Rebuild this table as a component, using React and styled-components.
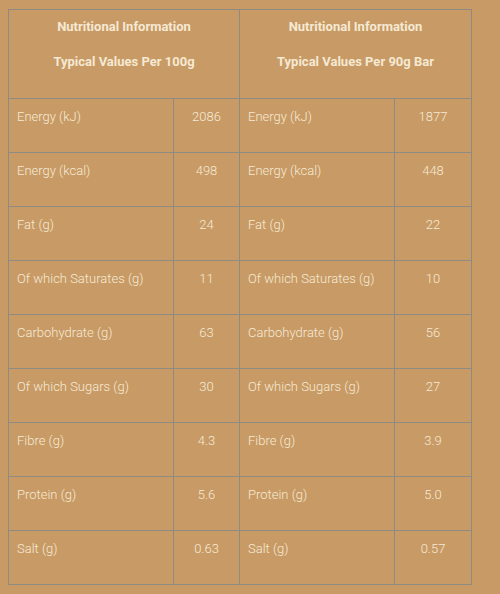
import React from "react";
import styled, { createGlobalStyle } from "styled-components";

const rows = [
  ["Energy (kJ)", "2086", "1877"],
  ["Energy (kcal)", "498", "448"],
  ["Fat (g)", "24", "22"],
  ["Of which Saturates (g)", "11", "10"],
  ["Carbohydrate (g)", "63", "56"],
  ["Of which Sugars (g)", "30", "27"],
  ["Fibre (g)", "4.3", "3.9"],
  ["Protein (g)", "5.6", "5.0"],
  ["Salt (g)", "0.63", "0.57"],
];

const GlobalStyle = createGlobalStyle`
  body {
    margin: 0;
    background: #c89a65;
    font-family: Roboto, "Liberation Sans", sans-serif;
  }
`;

const Wrap = styled.div`
  padding: 9px 8px;
`;

const Table = styled.table`
  width: 463px;
  border-collapse: collapse;
  table-layout: fixed;
  color: #f5e9d3;
`;

const HeadCell = styled.th`
  border: 1px solid #8f8b82;
  padding: 7px 8px 11px;
  font-size: 13px;
  font-weight: 700;
  text-align: center;
  vertical-align: top;

  p {
    margin: 0 0 15px;
    line-height: 20px;
  }
`;

const Cell = styled.td`
  border: 1px solid #8f8b82;
  padding: 8px 8px 6px 8px;
  font-size: 13px;
  font-weight: 300;
  vertical-align: top;
  text-align: ${(p) => (p.$num ? "center" : "left")};
  color: #f6ead5;

  p {
    margin: 0 0 20px;
    line-height: 19px;
  }
`;

const App = () => {
  return (
    <>
      <GlobalStyle />
      <Wrap>
        <Table>
          <colgroup>
            <col style={{ width: 165 }} />
            <col style={{ width: 66 }} />
            <col style={{ width: 155 }} />
            <col style={{ width: 77 }} />
          </colgroup>
          <thead>
            <tr>
              <HeadCell colSpan={2}>
                <p>Nutritional Information</p>
                <p>Typical Values Per 100g</p>
              </HeadCell>
              <HeadCell colSpan={2}>
                <p>Nutritional Information</p>
                <p>Typical Values Per 90g Bar</p>
              </HeadCell>
            </tr>
          </thead>
          <tbody>
            {rows.map(([label, a, b]) => (
              <tr key={label}>
                <Cell><p>{label}</p></Cell>
                <Cell $num><p>{a}</p></Cell>
                <Cell><p>{label}</p></Cell>
                <Cell $num><p>{b}</p></Cell>
              </tr>
            ))}
          </tbody>
        </Table>
      </Wrap>
    </>
  );
};

export default App;
